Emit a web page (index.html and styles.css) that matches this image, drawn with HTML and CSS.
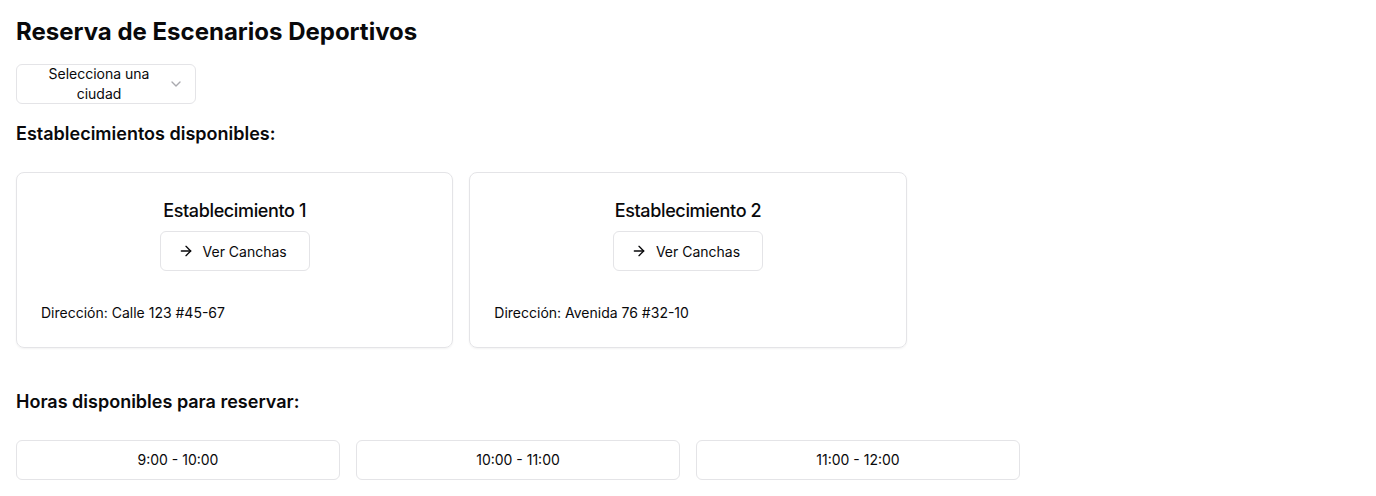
FILE: index.html
```html
<!DOCTYPE html>
<html lang="es">
<head>
<meta charset="utf-8">
<link rel="stylesheet" href="styles.css">
</head>
<body>
<main class="page">
  <h1 class="title">Reserva de Escenarios Deportivos</h1>
  <button class="select">
    <span class="select-text">Selecciona una ciudad</span>
    <svg class="chev" viewBox="0 0 24 24" width="16" height="16" fill="none" stroke="currentColor" stroke-width="2" stroke-linecap="round" stroke-linejoin="round"><path d="m6 9 6 6 6-6"/></svg>
  </button>
  <h2 class="section">Establecimientos disponibles:</h2>
  <div class="cards">
    <div class="card">
      <h3 class="card-title">Establecimiento 1</h3>
      <button class="btn"><svg viewBox="0 0 24 24" width="16" height="16" fill="none" stroke="currentColor" stroke-width="2" stroke-linecap="round" stroke-linejoin="round"><path d="M5 12h14"/><path d="m12 5 7 7-7 7"/></svg>Ver Canchas</button>
      <p class="addr">Dirección: Calle 123 #45-67</p>
    </div>
    <div class="card">
      <h3 class="card-title">Establecimiento 2</h3>
      <button class="btn"><svg viewBox="0 0 24 24" width="16" height="16" fill="none" stroke="currentColor" stroke-width="2" stroke-linecap="round" stroke-linejoin="round"><path d="M5 12h14"/><path d="m12 5 7 7-7 7"/></svg>Ver Canchas</button>
      <p class="addr">Dirección: Avenida 76 #32-10</p>
    </div>
  </div>
  <h2 class="section hours-title">Horas disponibles para reservar:</h2>
  <div class="slots">
    <button class="slot">9:00 - 10:00</button>
    <button class="slot">10:00 - 11:00</button>
    <button class="slot">11:00 - 12:00</button>
  </div>
</main>
</body>
</html>
```
FILE: styles.css
```css
* { box-sizing: border-box; }
html, body { margin: 0; background: #fff; }
body { font-family: Inter, "Noto Sans", sans-serif; color: #09090b; }
.page { padding: 16px; }
.title { margin: 0; font-size: 24px; line-height: 32px; font-weight: 700; }
.select {
  margin-top: 16px;
  width: 180px; height: 40px;
  display: flex; align-items: center; justify-content: space-between;
  padding: 0 11px 0 13px;
  border: 1px solid #e4e4e7; border-radius: 6px; background: #fff;
  font-family: inherit; font-size: 14px; line-height: 20px; color: #09090b;
}
.select-text { flex: 1; text-align: center; padding: 0 8px; }
.chev { color: #71717a; opacity: 0.6; flex-shrink: 0; }
.section { margin: 16px 0 0; font-size: 18px; line-height: 28px; font-weight: 600; }
.cards { margin-top: 24px; display: grid; grid-template-columns: repeat(3, 1fr); gap: 16px; }
.card {
  border: 1px solid #e4e4e7; border-radius: 8px; padding: 24px;
  display: flex; flex-direction: column; align-items: center;
  box-shadow: 0 1px 2px rgba(0,0,0,0.05);
}
.card-title { margin: 0; font-size: 18px; line-height: 28px; font-weight: 500; letter-spacing: -0.02em; }
.btn {
  margin-top: 6px; height: 40px; padding: 0 22px 0 17px;
  display: inline-flex; align-items: center; gap: 9px;
  border: 1px solid #e4e4e7; border-radius: 6px; background: #fff;
  font-family: inherit; font-size: 14px; font-weight: 400; color: #09090b;
}
.addr { align-self: stretch; margin: 32px 0 0; font-size: 14px; line-height: 20px; }
.hours-title { margin-top: 40px; }
.slots { margin-top: 24px; display: grid; grid-template-columns: repeat(4, 1fr); gap: 16px; }
.slot {
  height: 40px; border: 1px solid #e4e4e7; border-radius: 6px; background: #fff;
  font-family: inherit; font-size: 14px; line-height: 20px; color: #09090b;
  padding: 0 0 1px;
}
```
